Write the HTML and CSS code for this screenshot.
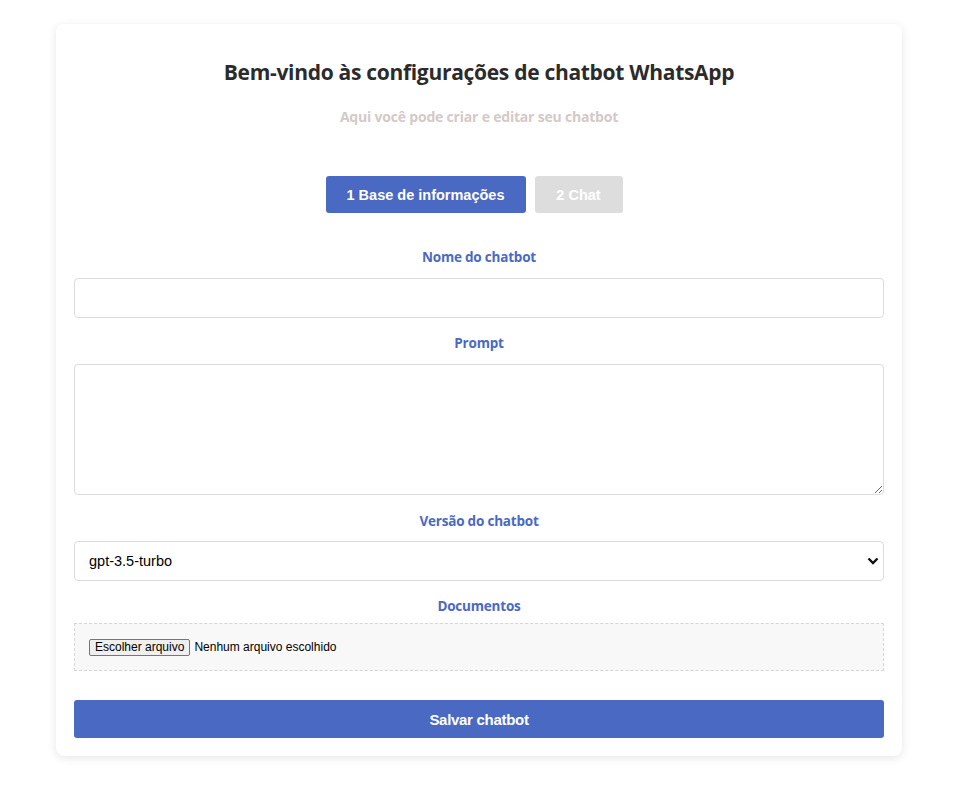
FILE: index.html
```html
<!DOCTYPE html>
<html lang="pt-BR">
<head>
<meta charset="utf-8">
<title>Configurações de chatbot</title>
<link rel="stylesheet" href="styles.css">
</head>
<body>
<main class="card">
  <h1 class="title">Bem-vindo às configurações de chatbot WhatsApp</h1>
  <p class="subtitle">Aqui você pode criar e editar seu chatbot</p>
  <div class="steps">
    <button class="step step-active">1 Base de informações</button>
    <button class="step step-inactive">2 Chat</button>
  </div>
  <form class="form">
    <label class="label" for="nome">Nome do chatbot</label>
    <input class="field" id="nome" type="text">
    <label class="label" for="prompt">Prompt</label>
    <textarea class="field textarea" id="prompt"></textarea>
    <label class="label label-tight" for="versao">Versão do chatbot</label>
    <div class="select-wrap">
      <select class="field select" id="versao">
        <option>gpt-3.5-turbo</option>
      </select>
      <svg class="chevron" width="12" height="8" viewBox="0 0 12 8"><path d="M1.5 1.5 L6 6 L10.5 1.5" fill="none" stroke="#111" stroke-width="2.4"/></svg>
    </div>
    <span class="label label-docs">Documentos</span>
    <div class="filebox">
      <span class="file-btn">Escolher arquivo</span>
      <span class="file-text">Nenhum arquivo escolhido</span>
    </div>
    <button type="button" class="save">Salvar chatbot</button>
  </form>
</main>
</body>
</html>
```
FILE: styles.css
```css
* { box-sizing: border-box; }
html, body { margin: 0; background: #fff; }
body { padding: 24px 0 40px; font-family: "Open Sans", "Noto Sans", sans-serif; }
.card {
  width: 846px;
  margin: 0 0 0 56px;
  background: #fff;
  border-radius: 8px;
  box-shadow: 0 2px 10px rgba(0,0,0,0.1);
  padding: 26px 18px 18px;
}
.title {
  margin: 0;
  text-align: center;
  font-size: 21px;
  line-height: 44px;
  font-weight: 700;
  color: #2b2b2b;
  letter-spacing: -0.3px;
}
.subtitle {
  margin: 14px 0 0;
  text-align: center;
  font-size: 14px;
  line-height: 18px;
  font-weight: 700;
  color: #d4c9c9;
  letter-spacing: -0.2px;
}
.steps {
  display: flex;
  justify-content: center;
  gap: 9px;
  margin-top: 50px;
  padding-right: 10px;
}
.step {
  height: 37px;
  border: 0;
  border-radius: 3px;
  color: #fff;
  font-family: "Liberation Sans", Arial, sans-serif;
  font-weight: 700;
  font-size: 14.5px;
  padding: 0;
}
.step-active { width: 200px; background: #4a69c2; }
.step-inactive { width: 88px; background: #dddddd; }
.form { display: flex; flex-direction: column; margin-top: 34px; }
.label {
  display: block;
  text-align: center;
  font-size: 13.5px;
  font-weight: 700;
  color: #4a69c2;
  line-height: 20px;
  letter-spacing: -0.2px;
  margin-bottom: 11px;
}
.label-tight { margin-bottom: 10px; }
.label-docs { margin-bottom: 7px; }
.field {
  width: 100%;
  height: 40px;
  border: 1px solid #dcdcdc;
  border-radius: 4px;
  background: #fff;
  font-family: "Liberation Sans", Arial, sans-serif;
  font-size: 16px;
  padding: 0 14px;
  margin: 0 0 15px;
  display: block;
}
.textarea { height: 131px; resize: vertical; margin-bottom: 16px; }
.select-wrap { position: relative; margin-bottom: 15px; }
.select { appearance: none; -webkit-appearance: none; margin: 0; color: #000; font-size: 14.5px; }
.chevron { position: absolute; right: 5px; top: 16px; pointer-events: none; }
.filebox {
  height: 48px;
  border: 1px dashed #d6d6d6;
  background: #f8f8f8;
  display: flex;
  align-items: center;
  padding: 0 14px;
  font-family: "Liberation Sans", Arial, sans-serif;
  font-size: 12px;
  color: #000;
}
.file-btn {
  display: inline-block;
  height: 17px;
  line-height: 15px;
  padding: 0 5px;
  border: 1px solid #767676;
  border-radius: 2px;
  background: #efefef;
  margin-right: 4px;
}
.save {
  margin-top: 29px;
  height: 38px;
  width: 100%;
  border: 0;
  border-radius: 3px;
  background: #4a69c2;
  color: #fff;
  font-family: "Liberation Sans", Arial, sans-serif;
  font-weight: 700;
  font-size: 15px;
  letter-spacing: -0.3px;
}
```
